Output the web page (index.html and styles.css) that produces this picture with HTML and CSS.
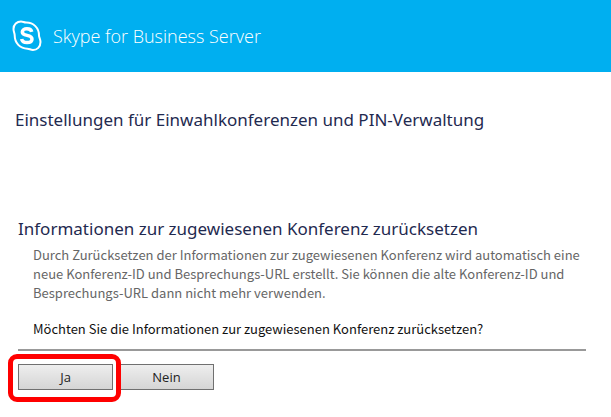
FILE: index.html
```html
<!DOCTYPE html>
<html lang="de">
<head>
    <meta charset="UTF-8">
    <meta name="viewport" content="width=device-width, initial-scale=1.0">
    <title>Skype for Business Server</title>
    <link rel="stylesheet" href="styles.css">
</head>
<body>
    <header class="header">
        <svg class="logo" viewBox="0 0 30 32" aria-hidden="true">
            <path class="logo-outline" d="M9 1.500C11 1.500 12 2.600 14 2.600C21.500 2.400 27 8 27 15.500C27 17.500 28.500 19 28.500 22C28.500 27 25 30 21 30C18.500 30 17.500 28.700 15.500 28.700C8 28.700 2.700 23 2.700 15.500C2.700 13 1.500 12 1.500 9C1.500 4.500 5 1.500 9 1.500Z"/>
            <path class="logo-letter" d="M19.700 11.800C19.200 9.500 17.500 8.800 14.900 8.800C12.200 8.800 10.300 9.900 10.300 12C10.300 16.800 20 14 20 19C20 21.300 18 22.600 15 22.600C12 22.600 10 21.500 9.700 19"/>
        </svg>
        <span class="brand">Skype for Business Server</span>
    </header>

    <main class="content">
        <h1 class="page-title">Einstellungen für Einwahlkonferenzen und PIN-Verwaltung</h1>

        <form class="reset-form">
            <h2 class="section-title">Informationen zur zugewiesenen Konferenz zurücksetzen</h2>
            <p class="description">
                Durch Zurücksetzen der Informationen zur zugewiesenen Konferenz wird automatisch eine<br>
                neue Konferenz-ID und Besprechungs-URL erstellt. Sie können die alte Konferenz-ID und<br>
                Besprechungs-URL dann nicht mehr verwenden.
            </p>
            <p class="question">Möchten Sie die Informationen zur zugewiesenen Konferenz zurücksetzen?</p>
            <div class="actions">
                <div class="highlight">
                    <button type="button" class="btn">Ja</button>
                </div>
                <button type="button" class="btn">Nein</button>
            </div>
        </form>
    </main>
</body>
</html>
```

FILE: styles.css
```css
body {
    margin: 0;
    background: #ffffff;
    font-family: "Noto Sans CJK SC", "Open Sans", sans-serif;
    font-size: 13px;
    line-height: 19px;
}

.header {
    display: flex;
    align-items: center;
    gap: 11px;
    height: 72px;
    padding: 0 12px;
    background: #00aff0;
    color: #ffffff;
}

.logo {
    width: 30px;
    height: 32px;
    fill: none;
    stroke: #ffffff;
}

.logo-outline {
    stroke-width: 2;
}

.logo-letter {
    stroke-width: 3.5;
}

.brand {
    font-family: "Open Sans", sans-serif;
    font-size: 18px;
    font-weight: 300;
}

.content {
    padding: 36px 25px 27px 15px;
}

h1,
h2 {
    margin: 0;
    color: #1f2a50;
    font-family: "Noto Sans", "Open Sans", sans-serif;
    font-size: 17px;
    font-weight: 400;
    line-height: 24px;
}

.reset-form {
    margin: 85px 0 0 3px;
}

.description,
.question {
    margin: 4px 0 0 15px;
}

.description {
    color: #666666;
}

.question {
    margin-top: 17px;
    color: #111111;
}

.actions {
    display: flex;
    gap: 6px;
    margin-top: 11px;
    padding-top: 13px;
    border-top: 2px solid #999999;
}

.highlight {
    position: relative;
}

/* red marker around the button to click */
.highlight::after {
    content: "";
    position: absolute;
    inset: -10px -8px -12px -10px;
    border: 5px solid #ff0000;
    border-radius: 9px;
    pointer-events: none;
}

.btn {
    display: block;
    width: 95px;
    height: 26px;
    padding: 0;
    border: 1px solid #707070;
    background: linear-gradient(#eeeeee, #d5d5d5);
    color: #222222;
    font-family: "Open Sans", sans-serif;
    font-size: 13px;
    cursor: pointer;
}
```
